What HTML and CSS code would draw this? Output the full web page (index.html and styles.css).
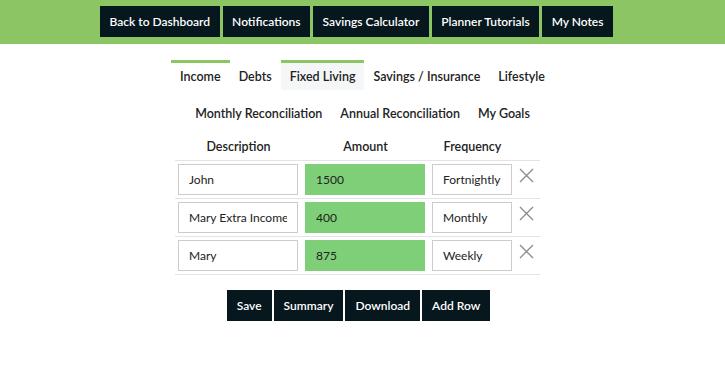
FILE: index.html
```html
<!DOCTYPE html>
<html lang="en">
<head>
    <meta charset="UTF-8">
    <meta name="viewport" content="width=device-width, initial-scale=1.0">
    <title>Income</title>
    <link rel="stylesheet" href="styles.css">
</head>
<body>
    <div id="topBar">
        <button class="navButton">Back to Dashboard</button>
        <button class="navButton">Notifications</button>
        <button class="navButton">Savings Calculator</button>
        <button class="navButton">Planner Tutorials</button>
        <button class="navButton">My Notes</button>
    </div>

    <div id="tabs">
        <div class="tabRow">
            <span class="tab marked">Income</span>
            <span class="tab">Debts</span>
            <span class="tab marked active">Fixed Living</span>
            <span class="tab">Savings / Insurance</span>
            <span class="tab">Lifestyle</span>
        </div>
        <div class="tabRow">
            <span class="tab">Monthly Reconciliation</span>
            <span class="tab">Annual Reconciliation</span>
            <span class="tab">My Goals</span>
        </div>
    </div>

    <div id="tableWrap">
        <table id="incomeTable">
            <thead>
                <tr>
                    <th>Description</th>
                    <th>Amount</th>
                    <th>Frequency</th>
                    <th></th>
                </tr>
            </thead>
            <tbody>
                <tr>
                    <td><input class="desc" type="text" value="John"></td>
                    <td><input class="amount" type="text" value="1500"></td>
                    <td><input class="freq" type="text" value="Fortnightly"></td>
                    <td><svg class="remove" width="15" height="15" viewBox="0 0 15 15"><path d="M1 1 L14 14 M14 1 L1 14"/></svg></td>
                </tr>
                <tr>
                    <td><input class="desc" type="text" value="Mary Extra Income"></td>
                    <td><input class="amount" type="text" value="400"></td>
                    <td><input class="freq" type="text" value="Monthly"></td>
                    <td><svg class="remove" width="15" height="15" viewBox="0 0 15 15"><path d="M1 1 L14 14 M14 1 L1 14"/></svg></td>
                </tr>
                <tr>
                    <td><input class="desc" type="text" value="Mary"></td>
                    <td><input class="amount" type="text" value="875"></td>
                    <td><input class="freq" type="text" value="Weekly"></td>
                    <td><svg class="remove" width="15" height="15" viewBox="0 0 15 15"><path d="M1 1 L14 14 M14 1 L1 14"/></svg></td>
                </tr>
            </tbody>
        </table>
    </div>

    <div id="actions">
        <button class="actionButton">Save</button>
        <button class="actionButton">Summary</button>
        <button class="actionButton">Download</button>
        <button class="actionButton">Add Row</button>
    </div>
</body>
</html>
```

FILE: styles.css
```css
body {
    font-family: Lato, "Open Sans", sans-serif;
    margin: 0;
    color: #222;
    background: white;
}
#topBar {
    background-color: #8cc564;
    height: 44px;
    padding-top: 6px;
    box-sizing: border-box;
    display: flex;
    justify-content: center;
    gap: 3px;
    padding-right: 12px;
}
.navButton {
    font-family: Lato, sans-serif;
    font-weight: 600;
    font-size: 12px;
    color: white;
    background-color: #06171d;
    border: none;
    height: 31px;
    padding: 0 9.5px;
}
#tabs {
    margin-top: 16px;
}
.tabRow {
    display: flex;
    justify-content: center;
}
.tabRow + .tabRow {
    margin-top: 7px;
}
.tab {
    font-size: 12.5px;
    font-weight: 600;
    line-height: 15px;
    padding: 6px 9px;
    border-top: 3px solid transparent;
}
.tab.marked {
    border-top-color: #8cc564;
}
.tab.active {
    background-color: #f4f6f8;
}
#tableWrap {
    display: flex;
    justify-content: center;
    padding-right: 10px;
    margin-top: 12px;
}
#incomeTable {
    border-collapse: collapse;
    font-size: 12.5px;
}
#incomeTable th {
    font-weight: 600;
    line-height: 16px;
    padding: 0 0 5px;
}
#incomeTable td {
    border-top: 1px solid #e2e4e6;
    padding: 3px 4px 3px 3px;
    vertical-align: middle;
}
#incomeTable tr:last-child td {
    border-bottom: 1px solid #e2e4e6;
}
input {
    font-family: Lato, sans-serif;
    font-size: 12px;
    color: #222;
    height: 31px;
    box-sizing: border-box;
    border: 1px solid #ccc;
    padding: 0 10px;
    background: white;
}
.desc {
    width: 120px;
}
.amount {
    width: 120px;
    background-color: #7ecf78;
    border-color: #7ecf78;
}
.freq {
    width: 80px;
}
.remove {
    display: block;
    stroke: #8a8a8a;
    stroke-width: 1.3;
    fill: none;
    margin: -8px 2px 0 0;
}
#actions {
    display: flex;
    justify-content: center;
    gap: 2px;
    margin-top: 15px;
    padding-right: 8px;
}
.actionButton {
    font-family: Lato, sans-serif;
    font-weight: 600;
    font-size: 12px;
    color: white;
    background-color: #06171d;
    border: none;
    height: 31px;
    padding: 0 10px;
}
```
